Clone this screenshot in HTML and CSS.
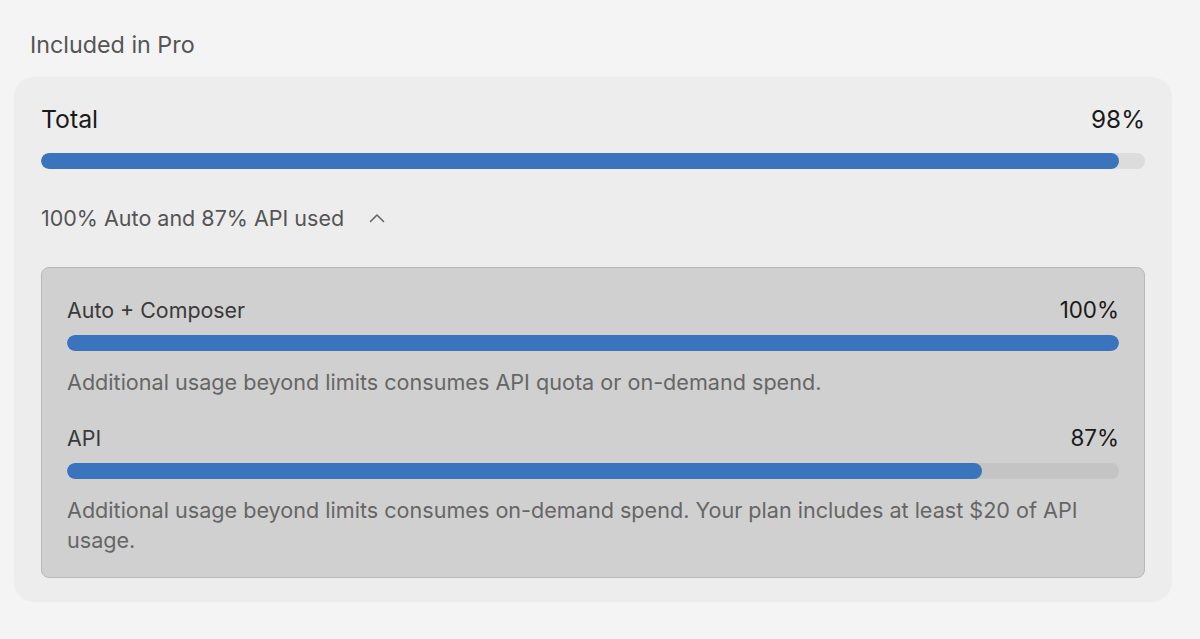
FILE: index.html
```html
<!DOCTYPE html>
<html lang="en">
<head>
<meta charset="utf-8">
<title>Usage</title>
<link rel="stylesheet" href="styles.css">
</head>
<body>
  <section class="usage">
    <h2 class="usage-title">Included in Pro</h2>
    <div class="usage-card">
      <div class="meter-head meter-head--total">
        <span class="meter-label">Total</span>
        <span class="meter-value">98%</span>
      </div>
      <div class="meter meter--total"><div class="meter-fill" style="width: 97.6%"></div></div>

      <button class="breakdown-toggle" type="button">
        <span>100% Auto and 87% API used</span>
        <svg class="chevron" width="16" height="10" viewBox="0 0 16 10" aria-hidden="true">
          <path d="M1.5 8.5 L8 2 L14.5 8.5" fill="none" stroke="currentColor" stroke-width="1.6" stroke-linecap="round" stroke-linejoin="round"/>
        </svg>
      </button>

      <div class="breakdown">
        <div class="meter-head">
          <span class="meter-label">Auto + Composer</span>
          <span class="meter-value">100%</span>
        </div>
        <div class="meter"><div class="meter-fill" style="width: 100%"></div></div>
        <p class="meter-note">Additional usage beyond limits consumes API quota or on-demand spend.</p>

        <div class="meter-head meter-head--next">
          <span class="meter-label">API</span>
          <span class="meter-value">87%</span>
        </div>
        <div class="meter"><div class="meter-fill" style="width: 87%"></div></div>
        <p class="meter-note">Additional usage beyond limits consumes on-demand spend. Your plan includes at least $20 of API usage.</p>
      </div>
    </div>
  </section>
</body>
</html>
```

FILE: styles.css
```css
* {
  box-sizing: border-box;
}

html, body {
  margin: 0;
  padding: 0;
  background: #f4f4f4;
}

body {
  font-family: Inter, "Noto Sans", "Liberation Sans", sans-serif;
  -webkit-font-smoothing: antialiased;
}

.usage {
  padding: 33px 28px 0 14px;
}

.usage-title {
  margin: 0 0 20px 16px;
  font-size: 23.3px;
  line-height: 24px;
  font-weight: 400;
  color: #555555;
}

.usage-card {
  background: #ededed;
  border-radius: 20px;
  padding: 28px 27px 24px 27px;
}

.meter-head {
  display: flex;
  justify-content: space-between;
  align-items: center;
  font-size: 21.4px;
  line-height: 26px;
  color: #3a3a3a;
}

.meter-head .meter-value {
  font-size: 22.4px;
}

.meter-head--total {
  font-size: 24.8px;
  line-height: 28px;
  color: #1a1a1a;
}

.meter-head--total .meter-value {
  font-size: 24.3px;
}

.meter-value {
  color: #1a1a1a;
}

.meter-head--next {
  margin-top: 28px;
}

.meter {
  height: 16px;
  margin-top: 12px;
  border-radius: 8px;
  background: #c4c4c4;
  overflow: hidden;
}

.meter--total {
  margin-top: 20px;
  background: #dcdcdc;
}

.meter-fill {
  height: 100%;
  border-radius: 8px;
  background: #3a74bd;
}

.breakdown-toggle {
  display: flex;
  align-items: center;
  gap: 25px;
  margin-top: 35px;
  padding: 0;
  border: 0;
  background: none;
  font: inherit;
  font-size: 21.5px;
  line-height: 28px;
  color: #555555;
  cursor: pointer;
}

.chevron {
  color: #666666;
}

.breakdown {
  margin-top: 35px;
  background: #d0d0d0;
  border: 1px solid #b9b9b9;
  border-radius: 8px;
  padding: 29px 25px 22px 25px;
}

.meter-note {
  margin: 16px 0 0 0;
  font-size: 21.6px;
  line-height: 30px;
  color: #666666;
}
```
